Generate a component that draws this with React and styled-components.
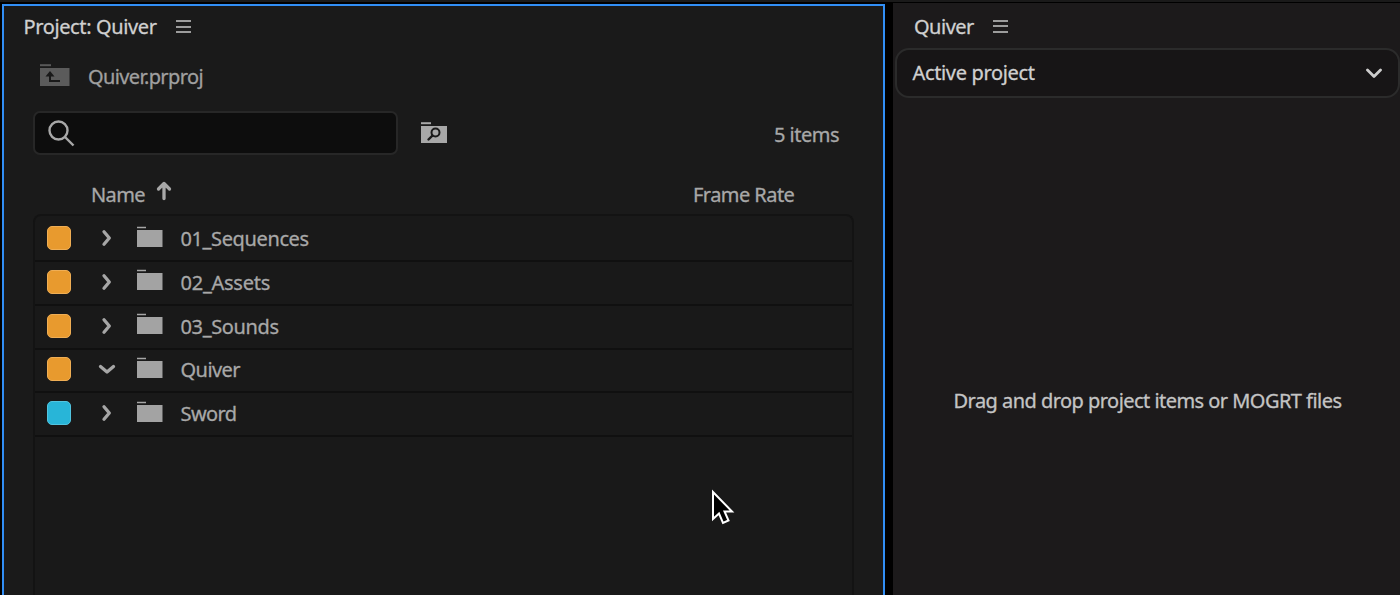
import React from "react";
import styled, { createGlobalStyle } from "styled-components";

const GlobalStyle = createGlobalStyle`
  * { box-sizing: border-box; }
  body { margin: 0; background: #000; overflow: hidden; }
`;

const Workspace = styled.div`
  width: 1400px;
  height: 595px;
  display: flex;
  flex-direction: column;
  background: #000;
  overflow: hidden;
  font-family: "Noto Sans", "Open Sans", sans-serif;
  font-size: 20px;
  line-height: 28px;
  color: #a8a8a8;
`;

const TopEdge = styled.div`
  height: 2px;
  flex: none;
  background: #1a1a1a;
`;

const Panels = styled.div`
  flex: 1;
  min-height: 0;
  display: flex;
  align-items: stretch;
  gap: 8px;
  padding-left: 2px;
`;

const ProjectPanel = styled.section`
  width: 883px;
  flex: none;
  margin-top: 2px;
  border: 2px solid #318ef5;
  border-bottom: 0;
  background: #1a1a1a;
  display: flex;
  flex-direction: column;
`;

const SidePanel = styled.section`
  flex: 1;
  margin-top: 1px;
  background: #1c1a1b;
  display: flex;
  flex-direction: column;
`;

const Text = styled.span`
  display: block;
  white-space: nowrap;
  color: ${(p) => p.$color || "#a8a8a8"};
  letter-spacing: ${(p) => p.$track || 0}px;
  -webkit-text-stroke: 0.3px currentColor;
`;

const Tab = styled.header`
  display: flex;
  align-items: center;
  gap: 19px;
  height: ${(p) => p.$height || 42}px;
  padding: ${(p) => p.$top || 0}px 0 0 ${(p) => p.$inset}px;
`;

const MenuIcon = styled.span`
  width: 15px;
  height: 13px;
  border-top: 2px solid #9c9c9c;
  border-bottom: 2px solid #9c9c9c;
  margin-top: -1px;
  display: flex;
  align-items: center;
  &::before {
    content: "";
    width: 100%;
    height: 2px;
    background: #9c9c9c;
  }
`;

const PathRow = styled.div`
  display: flex;
  align-items: center;
  gap: 18px;
  height: 58px;
  padding-left: 36px;
`;

const PathIcon = styled.svg`
  margin-top: -3px;
`;

const SearchRow = styled.div`
  display: flex;
  align-items: center;
  height: 44px;
  margin-top: 5px;
  padding: 0 44px 0 29px;
`;

const SearchField = styled.div`
  width: 365px;
  height: 44px;
  border: 2px solid #272727;
  border-radius: 7px;
  background: #0d0d0d;
  display: flex;
  align-items: center;
  padding-left: 12.5px;
  margin-right: 22px;
`;

const Count = styled.div`
  margin-left: auto;
  padding-top: 4px;
`;

const ColumnHeads = styled.div`
  display: flex;
  align-items: center;
  height: 59px;
  padding: 20px 0 0 87px;
`;

const SortArrow = styled.svg`
  margin: -7px 0 0 11px;
`;

const RateHead = styled.div`
  margin-left: auto;
  width: 190px;
`;

const List = styled.div`
  flex: 1;
  margin: 0 29px 0 29px;
  border: 2px solid #131313;
  border-bottom: 0;
  border-radius: 8px 8px 0 0;
  background: #191919;
`;

const Row = styled.div`
  display: flex;
  align-items: center;
  height: ${(p) => (p.$first ? 46 : 43.8)}px;
  padding: ${(p) => (p.$first ? 2 : 0)}px 0 0 12px;
  border-bottom: 2px solid #101010;
`;

const Swatch = styled.span`
  width: 24px;
  height: 24px;
  margin-top: -2px;
  border-radius: 5px;
  border: 1px solid ${(p) => p.$edge};
  background: ${(p) => p.$fill};
`;

const Twirl = styled.svg`
  margin: -2px 19px 0 26px;
`;

const RowFolder = styled.svg`
  margin: -5px 17.5px 0 0;
`;

const ProjectSelect = styled.div`
  display: flex;
  align-items: center;
  justify-content: space-between;
  height: 50px;
  margin-left: 2px;
  padding: 0 16px 0 15.5px;
  border: 2px solid #2b2b2b;
  border-radius: 14px;
  background: #171516;
`;

const DropZone = styled.div`
  flex: 1;
  display: flex;
  justify-content: center;
  padding: 289px 0 0 2px;
`;

const Pointer = styled.svg`
  position: absolute;
  left: 711px;
  top: 489px;
`;

const items = [
  { name: "01_Sequences", track: -0.38 },
  { name: "02_Assets", track: -0.25 },
  { name: "03_Sounds", track: -0.35 },
  { name: "Quiver", track: -0.55, open: true },
  { name: "Sword", track: -0.6, cyan: true },
];

function Chevron({ open }) {
  return (
    <Twirl width="20" height="20" viewBox="0 0 20 20" fill="none" stroke="#a6a6a6" strokeWidth="3.3" strokeLinecap="round" strokeLinejoin="round">
      {open ? <path d="M3.500 7.500 10 13 16.500 7.500" /> : <path d="M7 3.700 12.300 10 7 16.300" />}
    </Twirl>
  );
}

export default function App() {
  return (
    <>
      <GlobalStyle />
      <Workspace>
        <TopEdge />
        <Panels>
          <ProjectPanel>
            <Tab $inset={19.5}>
              <Text $color="#d0d0d0" $track={-0.38}>Project: Quiver</Text>
              <MenuIcon />
            </Tab>
            <PathRow>
              <PathIcon width="30" height="23" viewBox="0 0 30 23">
                <path d="M0 1.200h11" stroke="#595959" strokeWidth="2" />
                <path d="M0 4h29.500v18H0z" fill="#5b5b5b" />
                <path d="M10 7 5.500 12.500h3.500V18H20v-2h-9v-3.500h3.500z" fill="#191919" />
              </PathIcon>
              <Text $color="#a0a0a0" $track={-0.62}>Quiver.prproj</Text>
            </PathRow>
            <SearchRow>
              <SearchField>
                <svg width="27" height="27" viewBox="0 0 27 27" fill="none" stroke="#a8a8a8" strokeWidth="2.400">
                  <circle cx="10.500" cy="10.500" r="9" />
                  <path d="M17 17 25.500 25.500" />
                </svg>
              </SearchField>
              <svg width="27" height="22" viewBox="0 0 27 22">
                <path d="M1 1.200h10" stroke="#a8a8a8" strokeWidth="2" />
                <path d="M1 4h26v17H1z" fill="#a8a8a8" />
                <circle cx="15.500" cy="10.500" r="4" fill="none" stroke="#1a1a1a" strokeWidth="2" />
                <path d="m12.500 13.500-4 4" stroke="#1a1a1a" strokeWidth="2.400" strokeLinecap="round" />
              </svg>
              <Count>
                <Text $track={-0.5}>5 items</Text>
              </Count>
            </SearchRow>
            <ColumnHeads>
              <Text $track={-0.6}>Name</Text>
              <SortArrow width="16" height="20" viewBox="0 0 16 20" fill="none" stroke="#a8a8a8" strokeWidth="3.300" strokeLinecap="round" strokeLinejoin="round">
                <path d="M8 17.500V3M2.500 8 8 2.500 13.500 8" />
              </SortArrow>
              <RateHead>
                <Text $track={-0.55}>Frame Rate</Text>
              </RateHead>
            </ColumnHeads>
            <List>
              {items.map((item, i) => (
                <Row key={item.name} $first={i === 0}>
                  <Swatch $fill={item.cyan ? "#28b5d8" : "#e89a2e"} $edge={item.cyan ? "#52c4df" : "#efae55"} />
                  <Chevron open={item.open} />
                  <RowFolder width="27" height="22" viewBox="0 0 27 22">
                    <path d="M1 1.500h9" stroke="#a6a6a6" strokeWidth="1.500" />
                    <path d="M1 4h25.500v17H1z" fill="#a3a3a3" />
                  </RowFolder>
                  <Text $track={item.track}>{item.name}</Text>
                </Row>
              ))}
            </List>
          </ProjectPanel>
          <SidePanel>
            <Tab $inset={21} $height={45} $top={2}>
              <Text $color="#d0d0d0" $track={-0.5}>Quiver</Text>
              <MenuIcon />
            </Tab>
            <ProjectSelect>
              <Text $color="#d0d0d0" $track={-0.35}>Active project</Text>
              <svg width="16" height="11" viewBox="0 0 16 11" fill="none" stroke="#cdcdcd" strokeWidth="2.800" strokeLinecap="round" strokeLinejoin="round">
                <path d="M1.500 2 8 8.500 14.500 2" />
              </svg>
            </ProjectSelect>
            <DropZone>
              <Text $color="#c4c4c4" $track={-0.54}>Drag and drop project items or MOGRT files</Text>
            </DropZone>
          </SidePanel>
        </Panels>
        <Pointer width="24" height="37" viewBox="0 0 24 37">
          <path d="M2 3v27l6-5.500 4 9.500 5.500-2.500-4-9H21z" fill="#000" stroke="#fff" strokeWidth="2" />
        </Pointer>
      </Workspace>
    </>
  );
}
